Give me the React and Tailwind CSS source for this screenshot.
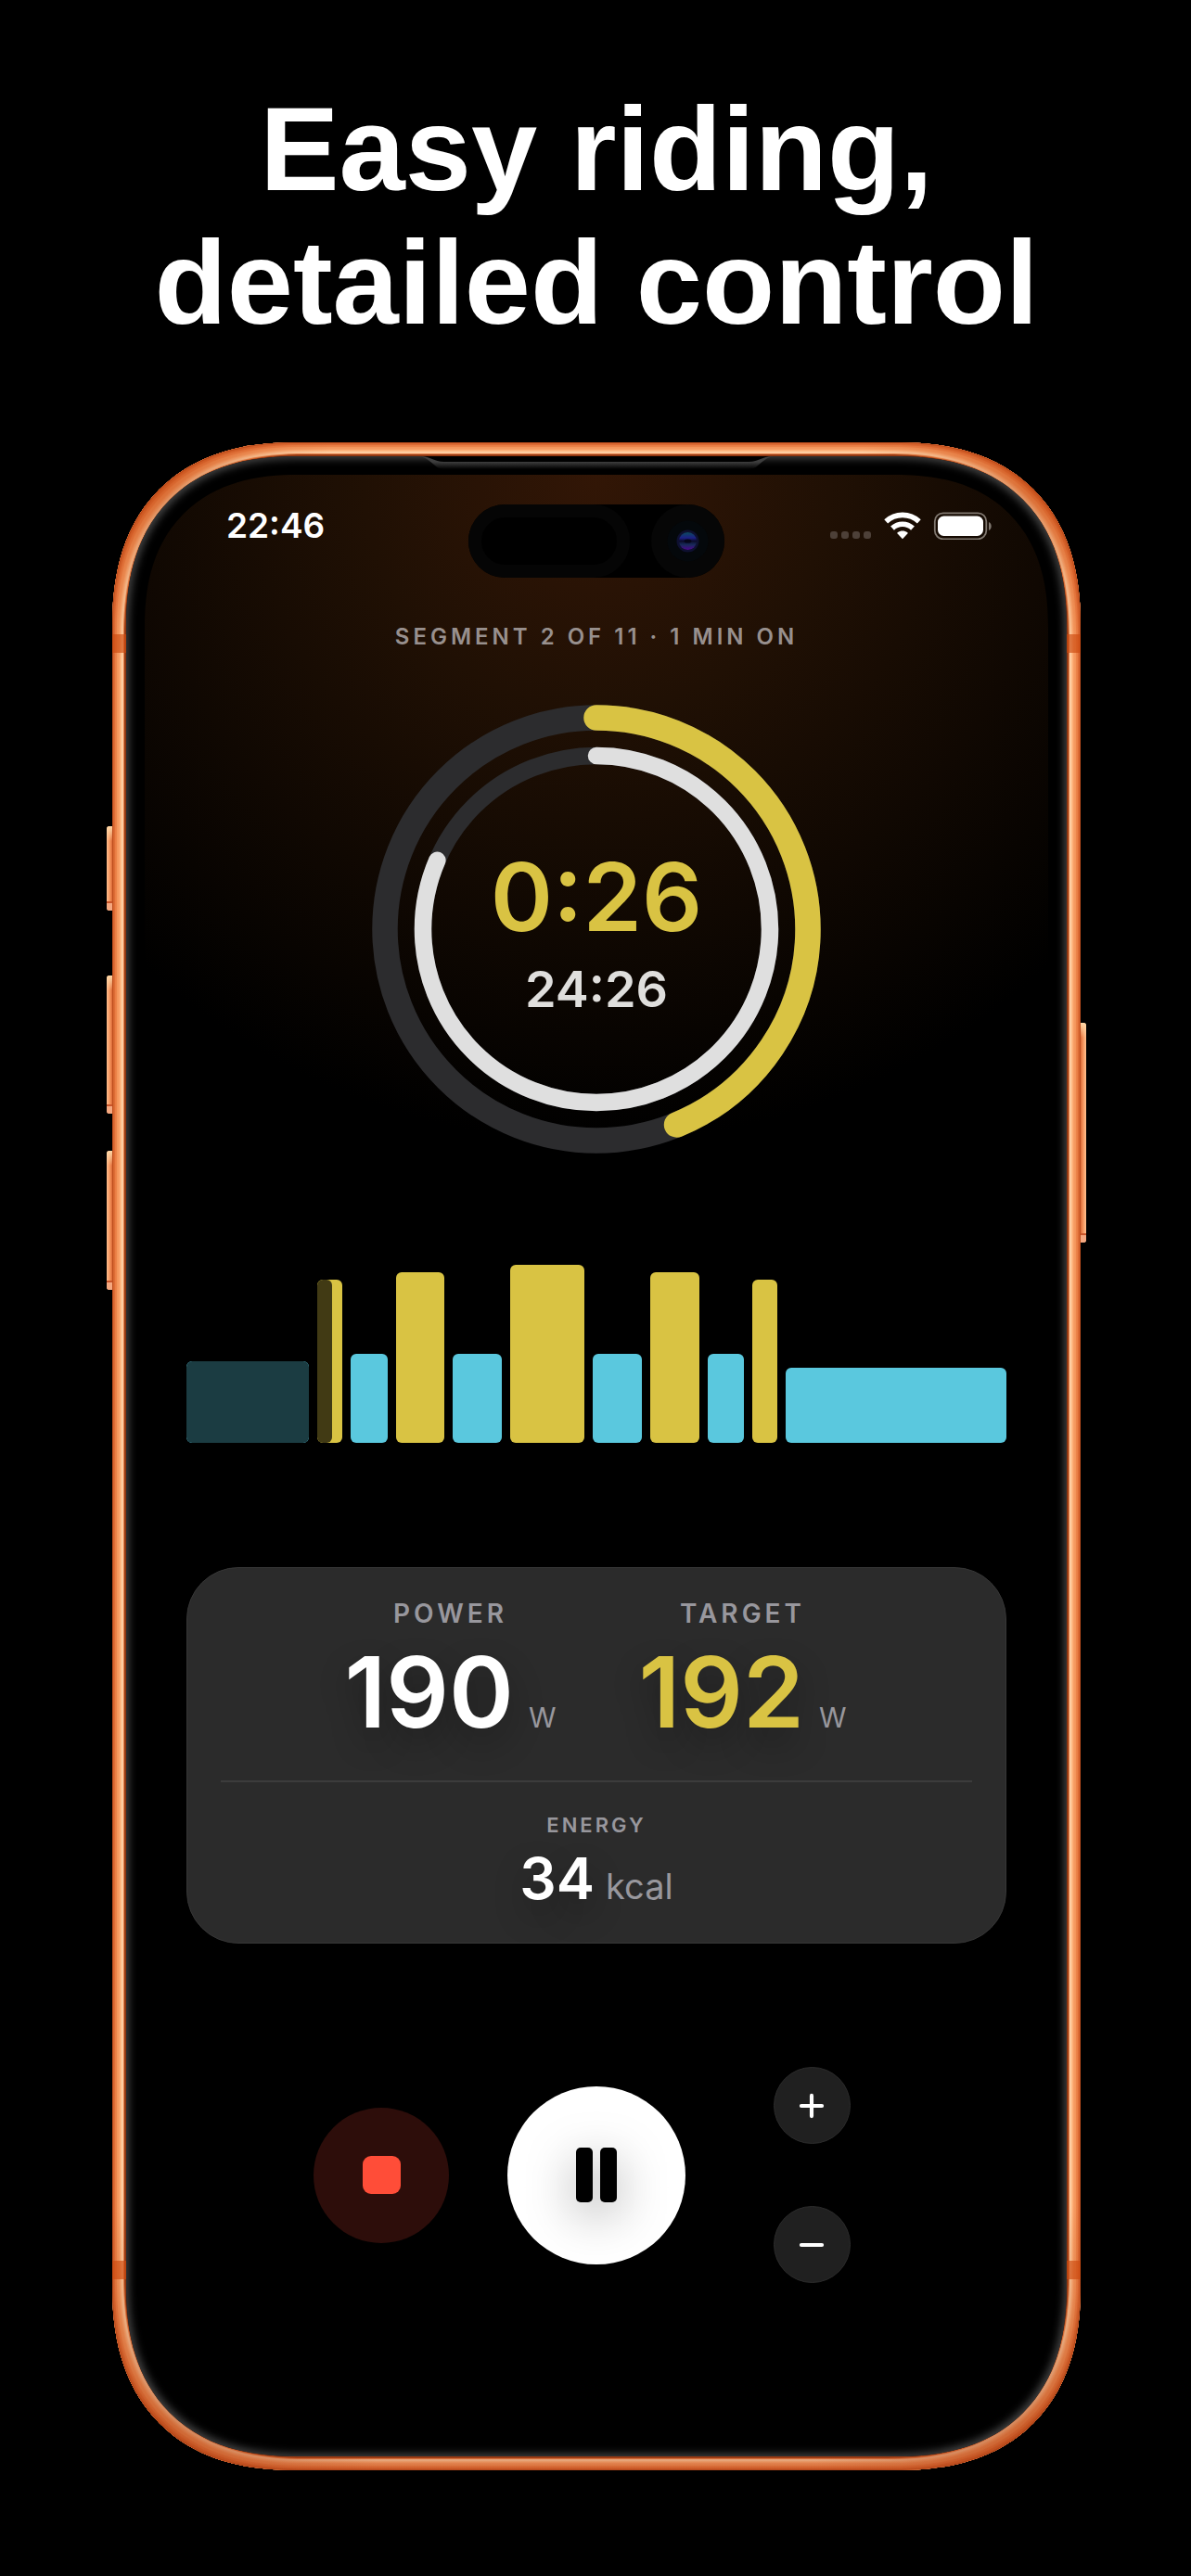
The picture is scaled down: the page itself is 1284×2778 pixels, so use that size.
import { Minus, Plus } from "lucide-react";

const SEGMENTS = [
  { minutes: 5, height: 88, zone: "easy", done: 1 },
  { minutes: 1, height: 176, zone: "hard", done: 0.58 },
  { minutes: 1.5, height: 96, zone: "easy", done: 0 },
  { minutes: 2, height: 184, zone: "hard", done: 0 },
  { minutes: 2, height: 96, zone: "easy", done: 0 },
  { minutes: 3, height: 192, zone: "hard", done: 0 },
  { minutes: 2, height: 96, zone: "easy", done: 0 },
  { minutes: 2, height: 184, zone: "hard", done: 0 },
  { minutes: 1.5, height: 96, zone: "easy", done: 0 },
  { minutes: 1, height: 176, zone: "hard", done: 0 },
  { minutes: 9, height: 81, zone: "easy", done: 0 },
];

const ZONE_COLORS = {
  easy: "bg-[#5ac8de]",
  hard: "bg-[#d9c343]",
};

const SIDE_BUTTONS = [
  "-left-1.5 top-[414px] h-[91px]",
  "-left-1.5 top-[575px] h-[149px]",
  "-left-1.5 top-[764px] h-[150px]",
  "-right-1.5 top-[626px] h-[237px] -scale-x-100",
];

const ANTENNA_BANDS = [
  "left-0 top-[207px]",
  "right-0 top-[207px]",
  "left-0 bottom-[206px]",
  "right-0 bottom-[206px]",
];

function SideButton({ className }) {
  return (
    <div
      className={`absolute w-2 overflow-hidden rounded-l-[3px] bg-linear-to-r from-[#ffb784] from-10% via-[#f08a52] via-50% to-[#c4481c] ${className}`}
    >
      <div className="h-4 bg-linear-to-b from-[#ffd9a8] to-transparent" />
      <div className="absolute inset-x-0 bottom-0 h-2.5 border-t-2 border-[#c9552a] bg-[#f5a880]" />
    </div>
  );
}

function StatusBar() {
  return (
    <div className="flex h-[50px] items-center justify-between pr-[60px] pl-[88px]">
      <span className="text-[37px] font-semibold text-white">22:46</span>
      <svg width="176" height="30" viewBox="0 0 176 30" aria-hidden="true">
        <g fill="#4d4038">
          <rect x="1" y="21" width="8" height="8" rx="3" />
          <rect x="13" y="21" width="8" height="8" rx="3" />
          <rect x="25" y="21" width="8" height="8" rx="3" />
          <rect x="37" y="21" width="8" height="8" rx="3" />
        </g>
        <g fill="none" stroke="#fff" strokeWidth="5.6">
          <path d="M61.2 10.4a26 26 0 0 1 35.6 0" />
          <path d="M68 17.6a16 16 0 0 1 22 0" />
        </g>
        <path
          d="M79 29.2l-5.4-5.6c-.5-.5-.4-1 .1-1.4 3-2.2 7.6-2.2 10.6 0 .5.4.6.9.1 1.4z"
          fill="#fff"
        />
        <rect
          x="113.8"
          y="1.3"
          width="55.5"
          height="28"
          rx="9"
          fill="none"
          stroke="#807870"
          strokeWidth="1.8"
        />
        <rect x="117" y="4.5" width="49" height="21.5" rx="6.5" fill="#fff" />
        <path d="M172 11c3.6 1.5 3.6 7.5 0 9z" fill="#807870" />
      </svg>
    </div>
  );
}

function DynamicIsland() {
  return (
    <div className="absolute top-8 left-1/2 flex h-[79px] w-[276px] -translate-x-1/2 items-center justify-between rounded-full bg-black">
      <div className="h-full w-[174px] rounded-full border-[14px] border-[#050505]" />
      <svg width="79" height="79" viewBox="0 0 79 79" aria-hidden="true">
        <defs>
          <linearGradient id="lens" x1="0" y1="0" x2="0" y2="1">
            <stop offset="0" stopColor="#0a4a5c" />
            <stop offset=".32" stopColor="#1d1f86" />
            <stop offset=".5" stopColor="#0c0b2a" />
            <stop offset=".7" stopColor="#172a58" />
            <stop offset="1" stopColor="#4c058c" />
          </linearGradient>
        </defs>
        <circle cx="39.5" cy="39.5" r="39.5" fill="#060606" />
        <circle cx="39.5" cy="39.5" r="22" fill="#04080b" />
        <circle cx="39.5" cy="39.5" r="12" fill="#0e1030" />
        <circle cx="39.5" cy="39.5" r="9.5" fill="url(#lens)" />
        <ellipse cx="39.5" cy="39.5" rx="4" ry="2" fill="#06061a" />
      </svg>
    </div>
  );
}

function ProgressRings({ segment, total }) {
  return (
    <div className="relative mx-auto mt-[57px] flex size-[484px] flex-col items-center justify-center pt-1.5">
      <svg
        viewBox="0 0 484 484"
        className="absolute inset-0 -rotate-90"
        fill="none"
        aria-hidden="true"
      >
        <circle cx="242" cy="242" r="228" stroke="#2c2c2e" strokeWidth="27.5" />
        <circle
          cx="242"
          cy="242"
          r="228"
          stroke="#d9c343"
          strokeWidth="27.5"
          strokeLinecap="round"
          pathLength="1"
          strokeDasharray={`${segment} 1`}
        />
        <circle cx="242" cy="242" r="187" stroke="#2c2c2e" strokeWidth="18.5" />
        <circle
          cx="242"
          cy="242"
          r="187"
          stroke="#dfdfdf"
          strokeWidth="18.5"
          strokeLinecap="round"
          pathLength="1"
          strokeDasharray={`${total} 1`}
        />
      </svg>
      <p className="relative text-[102px] leading-[104px] font-semibold text-[#d9c343]">
        0:26
      </p>
      <p className="relative mt-5 text-[54px] leading-14 font-semibold text-[#dfdedc]">
        24:26
      </p>
    </div>
  );
}

function WorkoutChart() {
  return (
    <div className="mt-[120px] flex h-48 items-end gap-[9px]">
      {SEGMENTS.map((segment, i) => (
        <div
          key={i}
          className={`basis-0 overflow-hidden rounded-md ${ZONE_COLORS[segment.zone]}`}
          style={{ flexGrow: segment.minutes, height: segment.height }}
        >
          {segment.done > 0 && (
            <div
              className="h-full rounded-md bg-black/70"
              style={{ width: `${segment.done * 100}%` }}
            />
          )}
        </div>
      ))}
    </div>
  );
}

function Metric({ label, value, color }) {
  return (
    <div className="flex min-w-[240px] flex-col items-center">
      <span className="text-[28px] leading-8 font-semibold tracking-[4px] text-[#98979d]">
        {label}
      </span>
      <p className="mt-[17px] flex items-baseline gap-4">
        <span
          className={`text-[106px] leading-[104px] font-semibold [text-shadow:0_16px_36px_rgb(0_0_0/0.3)] ${color}`}
        >
          {value}
        </span>
        <span className="text-[30px] leading-none text-[#98979d]">W</span>
      </p>
    </div>
  );
}

function StatsCard() {
  return (
    <div className="mt-[134px] rounded-[56px] border border-[#363636] bg-[#2b2b2b] px-9 pt-[33px] pb-[37px]">
      <div className="flex justify-center gap-[75px]">
        <Metric label="POWER" value="190" color="text-white" />
        <Metric label="TARGET" value="192" color="text-[#d9c343]" />
      </div>
      <hr className="mt-[43px] border-t-2 border-[#3c3c3c]" />
      <div className="mt-[34px] flex flex-col items-center">
        <span className="text-[22px] leading-6 font-semibold tracking-[3px] text-[#98979d]">
          ENERGY
        </span>
        <p className="mt-3.5 flex items-baseline gap-3">
          <span className="text-[62px] leading-16 font-semibold text-white [text-shadow:0_16px_36px_rgb(0_0_0/0.3)]">
            34
          </span>
          <span className="text-[38px] leading-none text-[#98979d]">kcal</span>
        </p>
      </div>
    </div>
  );
}

function Controls() {
  return (
    <div className="mx-auto mt-[133px] grid w-[696px] grid-cols-3 items-center justify-items-center">
      <button
        type="button"
        aria-label="Stop"
        className="flex size-[146px] items-center justify-center rounded-full bg-[#2d0d0a]"
      >
        <span className="size-[41px] rounded-[9px] bg-[#ff4d38]" />
      </button>
      <button
        type="button"
        aria-label="Pause"
        className="flex size-48 items-center justify-center overflow-hidden rounded-full bg-white"
      >
        <span className="flex gap-2 drop-shadow-[0_14px_26px_rgb(0_0_0/0.35)]">
          <span className="h-[59px] w-[18px] rounded-[5px] bg-black" />
          <span className="h-[59px] w-[18px] rounded-[5px] bg-black" />
        </span>
      </button>
      <div className="flex flex-col gap-[67px]">
        <button
          type="button"
          aria-label="Increase target"
          className="flex size-[83px] items-center justify-center rounded-full border border-[#2b2b2b] bg-[#202020] text-white"
        >
          <Plus size={38} strokeWidth={2.6} />
        </button>
        <button
          type="button"
          aria-label="Decrease target"
          className="flex size-[83px] items-center justify-center rounded-full border border-[#2b2b2b] bg-[#202020] text-white"
        >
          <Minus size={38} strokeWidth={2.6} />
        </button>
      </div>
    </div>
  );
}

function Phone({ children }) {
  return (
    <div className="relative mx-[119px] mt-[100px]">
      {SIDE_BUTTONS.map((position) => (
        <SideButton key={position} className={position} />
      ))}

      {/* metal rim, painted from the outside edge inwards */}
      <div className="relative overflow-hidden rounded-[200px] bg-[#6b2408] p-[15px] [corner-shape:superellipse(1.24)] shadow-[inset_0_0_1px_1px_#bb4c1c,inset_0_0_1px_3px_#dc6a34,inset_0_0_1px_5px_#ec8148,inset_0_0_2px_8px_#f6985e,inset_0_0_2px_10px_#ffb680,inset_0_0_1px_12px_#ffd8ae,inset_0_0_1px_13px_#ea7f45,inset_0_0_0_15px_#8f3610]">
        {/* the rim catches less light in the corners and along the bottom */}
        <div className="absolute inset-0 bg-[radial-gradient(circle_190px_at_50px_50px,rgb(190_70_15/0.5),transparent),radial-gradient(circle_190px_at_calc(100%-50px)_50px,rgb(190_70_15/0.5),transparent),radial-gradient(circle_240px_at_50px_calc(100%-50px),rgb(170_60_15/0.5),transparent),radial-gradient(circle_240px_at_calc(100%-50px)_calc(100%-50px),rgb(170_60_15/0.5),transparent),linear-gradient(to_top,rgb(170_60_20/0.35),transparent_60px)]" />
        {ANTENNA_BANDS.map((position) => (
          <div
            key={position}
            className={`absolute h-5 w-4 bg-[#cc4a10]/65 ${position}`}
          />
        ))}
        <div className="relative rounded-[185px] bg-black p-5 [corner-shape:superellipse(1.24)] shadow-[inset_0_0_8px_3px_#424242]">
          <svg
            width="380"
            height="14"
            viewBox="0 0 380 14"
            className="absolute top-0 left-1/2 -translate-x-1/2"
            aria-hidden="true"
          >
            <defs>
              <linearGradient
                id="slot"
                gradientUnits="userSpaceOnUse"
                x1="0"
                y1="6"
                x2="0"
                y2="14"
              >
                <stop offset="0" stopColor="#3e3e3e" />
                <stop offset="1" stopColor="#000" />
              </linearGradient>
            </defs>
            <path
              d="M0 0h380c-8 2-12 7-16 10-3 3-6 4-12 4H28c-6 0-9-1-12-4C12 7 8 2 0 0z"
              fill="url(#slot)"
            />
            <path
              d="M0 0c12 0 14 6 26 6h328c12 0 14-6 26-6z"
              fill="#000"
            />
          </svg>
          <div className="relative overflow-hidden rounded-[165px] bg-black bg-[radial-gradient(circle_720px_at_50%_0px,#321606,#201004_35%,#100802_68%,#000)] pt-[30px] pb-[167px] [corner-shape:superellipse(1.24)]">
            <DynamicIsland />
            {children}
          </div>
        </div>
      </div>
    </div>
  );
}

export default function App() {
  return (
    <main className="min-h-screen bg-black pt-[89px] pb-28 pl-0.5 font-['Inter',sans-serif]">
      <h1 className="text-center font-['Liberation_Sans',sans-serif] text-[128px] leading-36 font-bold text-white">
        Easy riding,
        <br />
        detailed control
      </h1>
      <Phone>
        <StatusBar />
        <div className="px-[45px]">
          <p className="mt-[79px] text-center text-[24px] leading-8 font-semibold tracking-[4px] text-[#98908e]">
            SEGMENT 2 OF 11 · 1 MIN ON
          </p>
          <ProgressRings segment={0.438} total={0.815} />
          <WorkoutChart />
          <StatsCard />
          <Controls />
        </div>
      </Phone>
    </main>
  );
}
